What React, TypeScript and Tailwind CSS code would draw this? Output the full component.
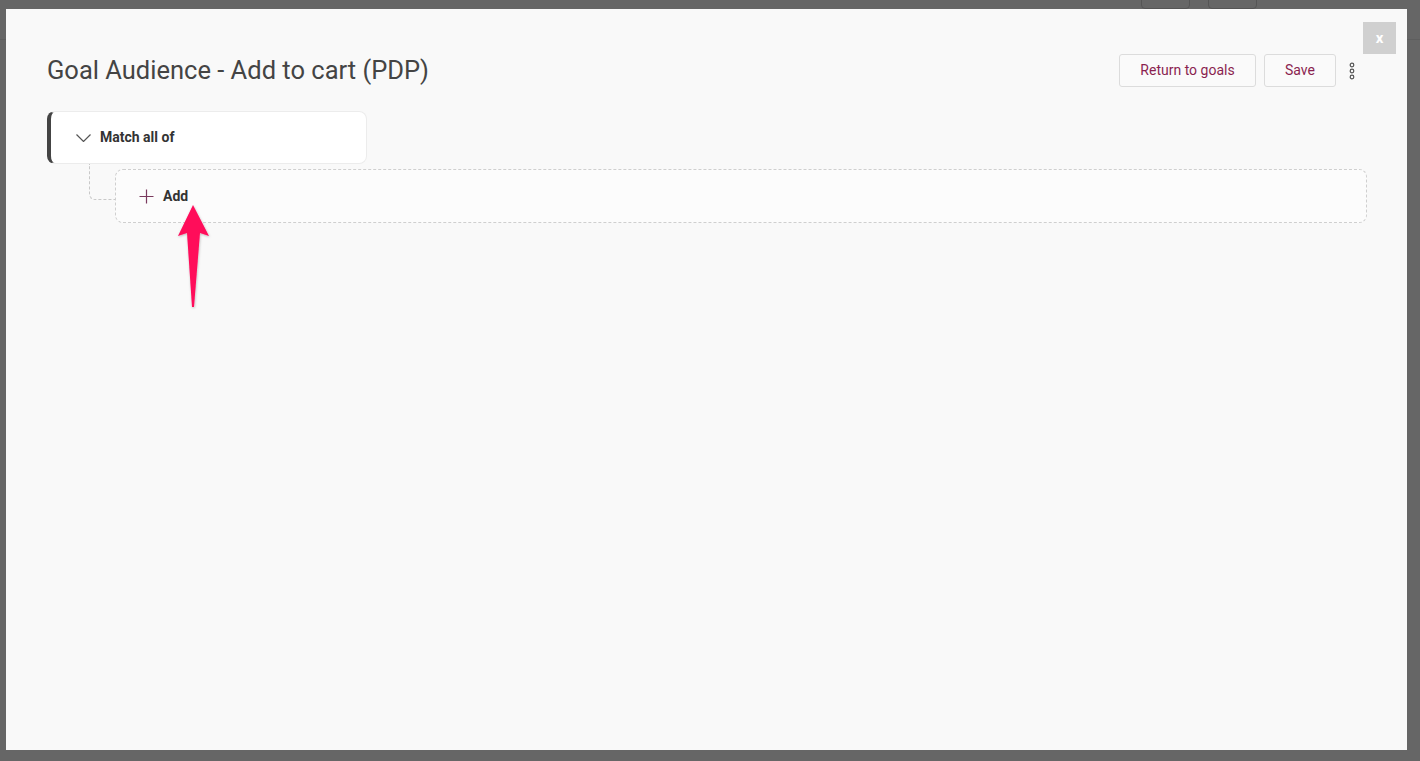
import React from "react";

const font = { fontFamily: "Roboto, 'Noto Sans', sans-serif" };

const Kebab = () => (
  <svg width="8" height="18" viewBox="0 0 8 18" fill="none" stroke="#555" strokeWidth="1.2">
    <circle cx="4" cy="3" r="1.8" />
    <circle cx="4" cy="9" r="1.8" />
    <circle cx="4" cy="15" r="1.8" />
  </svg>
);

const Chevron = () => (
  <svg width="15" height="8" viewBox="0 0 15 8" fill="none" stroke="#555" strokeWidth="1.2">
    <path d="M0.5 0.5 L7.5 7.5 L14.5 0.5" />
  </svg>
);

const Plus = () => (
  <svg width="15" height="15" viewBox="0 0 15 15" fill="none" stroke="#7a3a5e" strokeWidth="1.2">
    <path d="M7.5 0.5 V14.5 M0.5 7.5 H14.5" />
  </svg>
);

const Arrow = () => (
  <svg width="40" height="110" viewBox="0 0 40 110" className="absolute left-[168px] top-[193px]">
    <defs>
      <filter id="sh" x="-30%" y="-10%" width="160%" height="130%">
        <feDropShadow dx="0.5" dy="1" stdDeviation="1" floodColor="#000" floodOpacity="0.25" />
      </filter>
    </defs>
    <path
      d="M19 3 L35 34 L26 31 L20 105 L18 105 L13 31 L4 34 Z"
      fill="#ff0a5a"
      filter="url(#sh)"
    />
  </svg>
);

export default function App() {
  return (
    <div className="relative w-full h-[761px] bg-[#666666] pl-[6px] pt-[9px] pr-[13px] pb-[11px] flex" style={font}>
      {/* page behind the overlay */}
      <div className="absolute left-0 right-0 top-[39px] h-px bg-[#5e5e5e]" />
      <div className="absolute left-[1141px] top-[-6px] w-[49px] h-[15px] rounded-[4px] border border-[#555]" />
      <div className="absolute left-[1208px] top-[-6px] w-[49px] h-[15px] rounded-[4px] border border-[#555]" />

      <div className="relative flex-1 bg-[#f9f9f9] pl-[41px] pr-[40px] pt-[45px] flex flex-col">
        <button className="absolute top-[13px] right-[11px] w-[33px] h-[32px] bg-[#d0d0d0] text-white font-bold text-[15px] flex items-center justify-center">
          x
        </button>

        <div className="flex items-center h-[33px] pr-[8px]">
          <h1 className="flex-1 text-[25.5px] text-[#444] font-normal leading-none pt-[1px]">
            Goal Audience - Add to cart (PDP)
          </h1>
          <div className="flex items-center gap-[8px]">
            <button className="h-[33px] w-[137px] rounded-[3px] border border-[#dcdcdc] bg-[#fafafa] text-[14px] text-[#8a1f50]">
              Return to goals
            </button>
            <button className="h-[33px] w-[72px] rounded-[3px] border border-[#dcdcdc] bg-[#fafafa] text-[14px] text-[#8a1f50]">
              Save
            </button>
            <div className="ml-[1px] w-[14px] flex justify-center pt-[1px]">
              <Kebab />
            </div>
          </div>
        </div>

        <div className="mt-[24px] w-[320px] h-[53px] bg-white rounded-[8px] border border-[#ececec] border-l-4 border-l-[#444] flex items-center pl-[25px] gap-[9px]">
          <Chevron />
          <span className="text-[14px] font-bold text-[#333]">Match all of</span>
        </div>

        <div className="flex mt-[5px]">
          <div className="w-[42px] shrink-0" />
          <div className="w-[26px] h-[36px] -mt-[5px] border-l border-b border-dashed border-[#c8c8c8] rounded-bl-[6px] shrink-0" />
          <div className="flex-1 h-[54px] rounded-[8px] border border-dashed border-[#cfcfcf] bg-[#fcfcfc] flex items-center pl-[23px] gap-[9px]">
            <Plus />
            <span className="text-[14px] font-bold text-[#333]">Add</span>
          </div>
        </div>

        <Arrow />
      </div>
    </div>
  );
}
